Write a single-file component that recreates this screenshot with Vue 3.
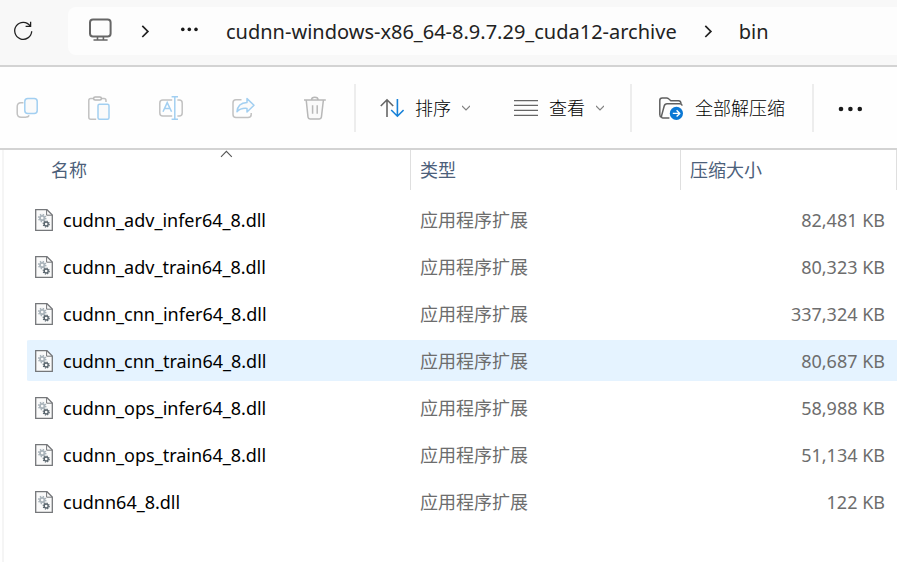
<script setup>
import { ref } from 'vue'

const files = [
  { name: 'cudnn_adv_infer64_8.dll', size: '82,481 KB' },
  { name: 'cudnn_adv_train64_8.dll', size: '80,323 KB' },
  { name: 'cudnn_cnn_infer64_8.dll', size: '337,324 KB' },
  { name: 'cudnn_cnn_train64_8.dll', size: '80,687 KB' },
  { name: 'cudnn_ops_infer64_8.dll', size: '58,988 KB' },
  { name: 'cudnn_ops_train64_8.dll', size: '51,134 KB' },
  { name: 'cudnn64_8.dll', size: '122 KB' },
]
const active = ref('cudnn_cnn_train64_8.dll')
</script>

<template>
  <div class="explorer">
    <header class="nav">
      <button class="refresh" aria-label="刷新">
        <svg width="22" height="22" viewBox="0 0 22 22" fill="none" stroke="#1f1f1f" stroke-width="1.3">
          <path d="M18.2 6A8.5 8.5 0 1 0 19.7 11.2M18.6 1.8V6.4H13.6" />
        </svg>
      </button>
      <nav class="address">
        <button class="crumb-icon" aria-label="此电脑">
          <svg width="28" height="28" viewBox="0 0 28 28" fill="none" stroke="#666" stroke-width="2">
            <rect x="4" y="4.4" width="20.6" height="17" rx="3" />
            <path d="M11.5 22V25M17.4 22V25M7.5 25H21.6" stroke-width="1.6" />
          </svg>
        </button>
        <svg class="chevron" width="14" height="14" viewBox="0 0 14 14" fill="none" stroke="#222" stroke-width="1.7">
          <path d="M4.3 1.8L9.9 7.4L4.3 13" />
        </svg>
        <button class="crumb-icon" aria-label="更多位置">
          <svg width="26" height="8" viewBox="0 0 26 8" fill="#1a1a1a">
            <circle cx="6.8" cy="4.4" r="1.8" /><circle cx="13.3" cy="4.4" r="1.8" /><circle cx="20" cy="4.4" r="1.8" />
          </svg>
        </button>
        <a class="crumb" href="#archive">cudnn-windows-x86_64-8.9.7.29_cuda12-archive</a>
        <svg class="chevron" width="14" height="14" viewBox="0 0 14 14" fill="none" stroke="#222" stroke-width="1.7">
          <path d="M4.3 1.8L9.9 7.4L4.3 13" />
        </svg>
        <a class="crumb" href="#bin">bin</a>
      </nav>
    </header>

    <div class="toolbar" role="toolbar">
      <div class="group edit">
        <button class="tool" aria-label="复制" disabled>
          <svg width="24" height="24" viewBox="0 0 24 24" fill="none" stroke-width="1.5">
            <path d="M8.4 6.8H6Q2.2 6.8 2.2 10.6V17.2Q2.2 21.2 6.2 21.2H10.4Q13.4 21.2 14.2 19.4" stroke="#c2c2c2" />
            <rect x="9.8" y="2.4" width="12.4" height="15" rx="3" fill="#fafafa" stroke="#a2cff1" />
          </svg>
        </button>
        <button class="tool" aria-label="粘贴" disabled>
          <svg width="24" height="24" viewBox="0 0 24 24" fill="none" stroke-width="1.5">
            <path d="M9.2 23.2H3.8Q1.8 23.2 1.8 21.2V4.6Q1.8 2.6 3.8 2.6H6.6M14.4 2.6H17Q19 2.6 19 4.6V6" stroke="#c2c2c2" />
            <rect x="6.6" y="1" width="7.8" height="3" rx="1.5" stroke="#b8b8b8" />
            <rect x="11" y="8.2" width="11" height="15" rx="1.5" fill="#fafafa" stroke="#a2cff1" />
          </svg>
        </button>
        <button class="tool" aria-label="重命名" disabled>
          <svg width="24" height="24" viewBox="0 0 24 24" fill="none" stroke-width="1.5">
            <path d="M13.2 4H3.8Q.8 4 .8 7V17Q.8 20 3.8 20H13.2M18.4 4H20.2Q23.2 4 23.2 7V17Q23.2 20 20.2 20H18.4" stroke="#c2c2c2" />
            <path d="M4 15.8L8.2 6.6L12.6 15.8M5.4 12.6H11.2M12.6 .8H19M12.6 23.2H19M15.8 .8V23.2" stroke="#a2cff1" />
          </svg>
        </button>
        <button class="tool" aria-label="共享" disabled>
          <svg width="24" height="24" viewBox="0 0 24 24" fill="none" stroke-width="1.5" stroke-linejoin="round">
            <path d="M10.5 3.8H5Q2 3.8 2 6.8V18.4Q2 21.4 5 21.4H17Q20.2 21.4 20.2 18.4V17" stroke="#c2c2c2" />
            <path d="M16 2.6L23 9.3L16 16V12.4Q9.6 11.8 6 15.8Q6.6 6.8 16 6.4Z" fill="#fafafa" stroke="#a2cff1" />
          </svg>
        </button>
        <button class="tool" aria-label="删除" disabled>
          <svg width="24" height="24" viewBox="0 0 24 24" fill="none" stroke="#b8b8b8" stroke-width="1.5">
            <path d="M3.2 4L5 21.2Q5.2 23 7 23H16.4Q18.2 23 18.4 21.2L20.4 4" fill="#fafafa" />
            <path d="M1 4H22.8M8.4 4Q8.6 1.2 11.8 1.2Q15 1.2 15.2 4M9.6 9.2V17.8M14.2 9.2V17.8" />
          </svg>
        </button>
      </div>
      <div class="group">
        <button class="command">
          <svg width="24" height="24" viewBox="0 0 24 24" fill="none" stroke-width="1.6">
            <path d="M7 21V3.8M.8 10L7 3.8L13.2 10" stroke="#666" />
            <path d="M17.4 3V20M11.2 14L17.4 20.2L23.6 14" stroke="#1781d8" />
          </svg>
          <span>排序</span>
          <svg width="8" height="6" viewBox="0 0 8 6" fill="none" stroke="#808080" stroke-width="1.2"><path d="M0 .8L4 4.8L8 .8" /></svg>
        </button>
        <button class="command">
          <svg width="24" height="24" viewBox="0 0 24 24" fill="none" stroke="#666" stroke-width="1.4">
            <path d="M0 4.6H24M0 9.4H24M0 14.4H24M0 19.4H24" />
          </svg>
          <span>查看</span>
          <svg width="8" height="6" viewBox="0 0 8 6" fill="none" stroke="#808080" stroke-width="1.2"><path d="M0 .8L4 4.8L8 .8" /></svg>
        </button>
      </div>
      <div class="group extract">
        <button class="command">
          <svg width="24" height="24" viewBox="0 0 24 24" fill="none" stroke="#606060" stroke-width="1.5" stroke-linejoin="round">
            <path d="M2.2 21Q.8 20.6 .8 18.6V4.4Q.8 2 3.2 2H7.6Q8.8 2 9.6 2.8L11.8 4.8H19.4Q21.8 4.8 22 7.6" />
            <path d="M10.4 22H4Q2 22 2.6 19.6L5.2 10Q5.8 7.8 8 7.8H20.6Q22.8 7.8 23.2 9.6" />
            <circle cx="17.4" cy="17.4" r="6.6" fill="#0b78d4" stroke="none" />
            <path d="M13.8 17.4H20.6M17.6 14.2L20.8 17.4L17.6 20.6" stroke="#fff" stroke-width="1.4" />
          </svg>
          <span>全部解压缩</span>
        </button>
      </div>
      <div class="group">
        <button class="more" aria-label="查看更多">
          <svg width="26" height="8" viewBox="0 0 26 8" fill="#1a1a1a">
            <circle cx="3" cy="5" r="2.3" /><circle cx="12.4" cy="5" r="2.3" /><circle cx="21.8" cy="5" r="2.3" />
          </svg>
        </button>
      </div>
    </div>

    <main class="list">
      <table>
        <colgroup><col class="col-name" /><col class="col-type" /><col /></colgroup>
        <thead>
          <tr>
            <th aria-sort="ascending">
              <button class="heading name">名称</button>
              <svg class="sort" width="14" height="8" viewBox="0 0 14 8" fill="none" stroke="#555" stroke-width="1.1"><path d="M2 6.8L7.4 1.4L12.8 6.8" /></svg>
            </th>
            <th><button class="heading">类型</button></th>
            <th><button class="heading">压缩大小</button></th>
          </tr>
        </thead>
        <tbody>
          <tr v-for="f in files" :key="f.name" :class="{ active: f.name === active }" @mouseenter="active = f.name">
            <td>
              <div class="file">
                <svg width="18" height="22" viewBox="0 0 18 22" fill="none">
                  <path d="M.7 .7H12L17.3 6V21.3H.7Z" fill="#fafafa" stroke="#75777a" stroke-width="1.3" />
                  <path d="M11.6 .8V6.2H17.2" stroke="#75777a" />
                  <circle cx="7.2" cy="9" r="3.5" stroke="#a9b3ba" stroke-width="1.6" stroke-dasharray="1.4 1.35" />
                  <circle cx="7.2" cy="9" r="2.2" stroke="#a9b3ba" stroke-width="1.8" />
                  <circle cx="11.2" cy="15" r="3" stroke="#59656d" stroke-width="1.2" stroke-dasharray="1.2 1.16" />
                  <circle cx="11.2" cy="15" r="2" stroke="#59656d" stroke-width="1.4" />
                </svg>
                <span>{{ f.name }}</span>
              </div>
            </td>
            <td class="type">应用程序扩展</td>
            <td class="size">{{ f.size }}</td>
          </tr>
        </tbody>
      </table>
    </main>
  </div>
</template>

<style>
body {
  margin: 0;
  background: #fff;
}
</style>

<style scoped>
.explorer {
  display: flex;
  flex-direction: column;
  min-height: 100vh;
  font-family: "Noto Sans", "Noto Sans CJK SC", sans-serif;
  font-size: 18px;
  line-height: 24px;
  color: #1a1a1a;
}
button {
  display: flex;
  align-items: center;
  padding: 0;
  border: 0;
  background: none;
  font: inherit;
  color: inherit;
  white-space: nowrap;
}
svg {
  display: block;
  flex: none;
}
.nav {
  display: flex;
  align-items: center;
  gap: 34px;
  box-sizing: border-box;
  height: 67px;
  padding: 0 0 4px 12px;
  border-bottom: 2px solid #d3d3d3;
  background: #f8f8f8;
}
.address {
  flex: 1;
  display: flex;
  align-items: center;
  gap: 24px;
  height: 48px;
  padding-left: 18px;
  border-radius: 8px 0 0 8px;
  background: #fdfdfd;
  overflow: hidden;
}
.crumb {
  padding-top: 2px;
  font-size: 20px;
  color: #222;
  text-decoration: none;
  white-space: nowrap;
}
.crumb-icon {
  padding-bottom: 4px;
}
.toolbar {
  display: flex;
  align-items: center;
  box-sizing: border-box;
  height: 83px;
  border-bottom: 2px solid #d3d3d3;
  background: #fefefe;
  color: #000;
  font-weight: 300;
}
.group {
  display: flex;
  align-items: center;
  gap: 44px;
  height: 48px;
  padding: 0 26px;
}
.group + .group {
  padding: 0 26px 0 24px;
  border-left: 2px solid #ededed;
}
.group.edit {
  gap: 48px;
  padding: 0 27px 0 15px;
}
.group + .group.extract {
  padding: 0 27px;
}
.command {
  gap: 11px;
}
.extract .command {
  gap: 12px;
}
.list {
  flex: 1;
  margin-left: 2px;
  padding-left: 23px;
  border-left: 2px solid #f5f5f5;
}
table {
  width: 100%;
  table-layout: fixed;
  border-spacing: 0;
}
.col-name {
  width: 384px;
}
.col-type {
  width: 270px;
}
th {
  position: relative;
  height: 46px;
  padding: 0;
  vertical-align: top;
  font-weight: 400;
}
.heading {
  box-sizing: border-box;
  width: 100%;
  height: 40px;
  padding-left: 9px;
  border-right: 1px solid #dfdfdf;
  color: #4c607a;
}
.heading.name {
  padding-left: 24px;
}
.sort {
  position: absolute;
  top: 0;
  left: 50%;
}
td {
  height: 41px;
  padding: 0 0 0 8px;
  border: solid transparent;
  border-width: 3px 0;
  background-clip: padding-box;
  color: #6d6d6d;
}
td.type {
  padding-left: 9px;
}
.active td {
  background-color: #e5f3ff;
}
.active td:first-child {
  border-radius: 4px 0 0 4px;
}
.file {
  display: flex;
  align-items: center;
  gap: 10px;
  color: #000;
}
td.size {
  padding: 0 12px 0 0;
  text-align: right;
}
</style>
